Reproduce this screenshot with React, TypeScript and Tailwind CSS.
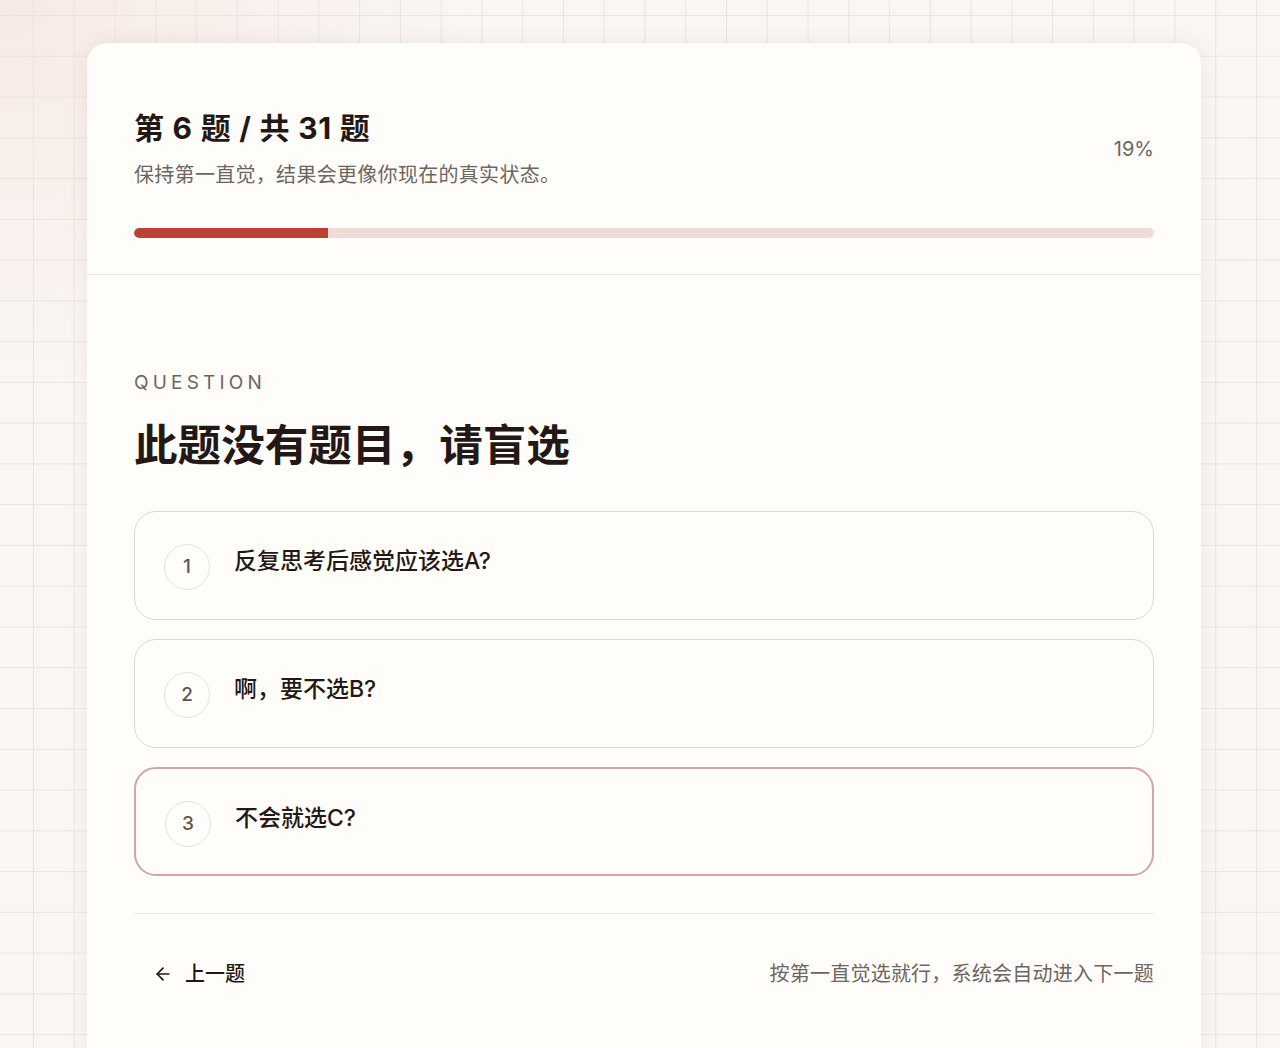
import { ArrowLeft } from 'lucide-react';

const options = [
  { id: 1, text: '反复思考后感觉应该选A?' },
  { id: 2, text: '啊，要不选B?' },
  { id: 3, text: '不会就选C?' },
];

export default function App() {
  const selected = 3;
  const total = 31;
  const current = 6;
  const percent = 19;

  return (
    <div
      className="min-h-[1048px] bg-[#faf6f3] bg-[linear-gradient(to_right,#ebe4df_1px,transparent_1px),linear-gradient(to_bottom,#ebe4df_1px,transparent_1px)] bg-[size:40.77px_40.77px] bg-[position:33px_15px] pt-[43px] pl-[87px] pr-[79px] overflow-hidden"
      style={{ fontFamily: 'Inter, "Noto Sans CJK SC", sans-serif' }}
    >
      <div className="relative">
        <div className="pointer-events-none absolute -left-[87px] -top-[43px] h-[420px] w-[520px] bg-[radial-gradient(ellipse_at_top_left,rgba(244,224,218,0.55),transparent_65%)]" />
        <div className="relative rounded-t-[20px] bg-[#fefdf9] shadow-[0_0_20px_rgba(120,80,60,0.09)] min-h-[1010px]">
          {/* header */}
          <div className="px-[47px] pt-[65px] pb-[36px] border-b border-[#e9e5e0]">
            <div className="flex items-center justify-between">
              <div>
                <h1 className="text-[30px] leading-[40px] font-bold tracking-[0.025em] text-[#231815]">
                  第 {current} 题 / 共 {total} 题
                </h1>
                <p className="mt-[12px] text-[20px] leading-[30px] tracking-[0.015em] text-[#6d6560]">
                  保持第一直觉，结果会更像你现在的真实状态。
                </p>
              </div>
              <span className="text-[20px] text-[#6d6560]">{percent}%</span>
            </div>
            <div className="mt-[38px] h-[10px] rounded-full bg-[#f1dbd6] overflow-hidden">
              <div className="h-full rounded-l-full bg-[#b84335]" style={{ width: `${percent}%` }} />
            </div>
          </div>

          {/* body */}
          <div className="px-[47px] pt-[96px]">
            <div className="text-[19px] leading-[24px] tracking-[0.22em] text-[#6d6560]">QUESTION</div>
            <h2 className="mt-[23px] text-[43.6px] leading-[56px] font-bold text-[#231815]">
              此题没有题目，请盲选
            </h2>

            <div className="mt-[37px] flex flex-col gap-[19px]">
              {options.map(opt => (
                <div
                  key={opt.id}
                  className={`flex items-start gap-[24px] h-[109px] px-[29px] pt-[31px] rounded-[22px] ${
                    selected === opt.id
                      ? 'border-2 border-[#d4a6a3]'
                      : 'border-[1.5px] border-[#dcd8d3]'
                  }`}
                >
                  <div className="mt-[1px] flex h-[46px] w-[46px] shrink-0 items-center justify-center rounded-full border border-[#e5e1dc] text-[19px] font-medium text-[#5c5652]">
                    {opt.id}
                  </div>
                  <div className="text-[23px] leading-[36px] font-medium text-[#231815]">{opt.text}</div>
                </div>
              ))}
            </div>

            <div className="mt-[37px] border-t border-[#e9e5e0] pt-[45px] flex items-center justify-between">
              <button className="flex items-center gap-[12px] pl-[19px] text-[20px] leading-[30px] font-medium text-[#231815]">
                <ArrowLeft size={20} strokeWidth={2} />
                上一题
              </button>
              <span className="text-[20px] leading-[30px] tracking-[0.012em] text-[#6d6560]">
                按第一直觉选就行，系统会自动进入下一题
              </span>
            </div>
          </div>
        </div>
      </div>
    </div>
  );
}
